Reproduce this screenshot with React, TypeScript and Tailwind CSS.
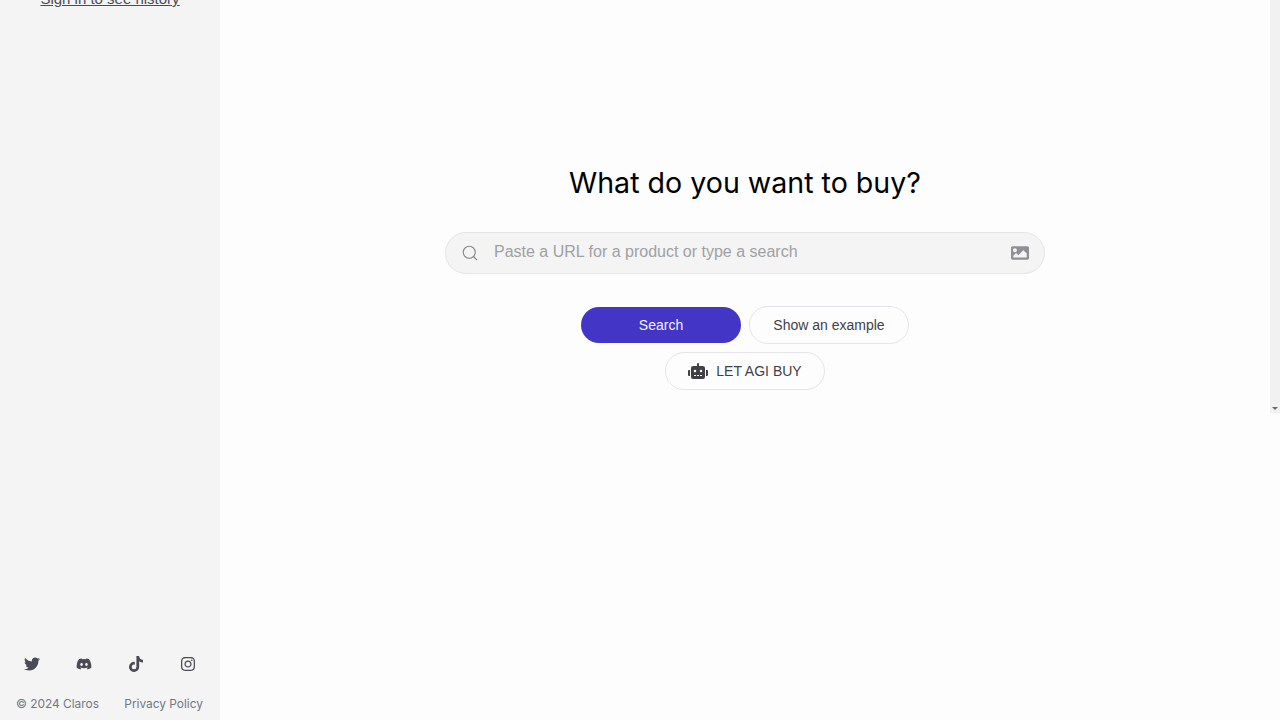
import { FaTwitter, FaDiscord, FaTiktok, FaInstagram, FaRobot, FaImage } from "react-icons/fa";
import { Search } from "lucide-react";

export default function App() {
  return (
    <div className="flex h-[720px] w-[1280px] overflow-hidden bg-[#fdfdfe] font-['Liberation_Sans',sans-serif]">
      <aside className="flex h-full w-[220px] shrink-0 flex-col justify-between bg-[#f4f4f4]">
        <a className="-mt-[10px] block text-center text-[15px] leading-[18px] text-[#4b4b55] underline">Sign in to see history</a>
        <div>
          <div className="flex items-center justify-between px-[24px] text-[#4a4a54]">
            <FaTwitter size={16} />
            <FaDiscord size={16} />
            <FaTiktok size={16} />
            <FaInstagram size={16} />
          </div>
          <div className="mt-[24px] mb-[8px] flex justify-between pr-[17px] pl-[16px] font-['Inter',sans-serif] text-[11.9px] leading-[16px] text-[#717787]">
            <span>© 2024 Claros</span>
            <span>Privacy Policy</span>
          </div>
        </div>
      </aside>
      <main className="flex flex-1 flex-col items-center pt-[163px]">
        <h1 className="font-['Inter',sans-serif] text-[28.6px] leading-[40px] font-normal text-black">What do you want to buy?</h1>
        <div className="mt-[29px] flex h-[42px] w-[600px] items-center rounded-full border border-[#e5e5e7] bg-[#f4f4f4] pr-[15px] pl-[15px]">
          <Search size={18} strokeWidth={1.5} className="text-[#8a8a8f]" />
          <input
            className="ml-[15px] flex-1 bg-transparent pb-[2px] text-[16px] text-[#333] outline-none placeholder:text-[#a0a0a4]"
            placeholder="Paste a URL for a product or type a search"
          />
          <FaImage size={18} className="text-[#8f8f94]" />
        </div>
        <div className="mt-[32px] flex items-center gap-[8px]">
          <button className="h-[36px] w-[160px] rounded-full bg-[#4335c5] text-[14px] text-[#f4f2ff]">Search</button>
          <button className="h-[38px] w-[160px] rounded-full border border-[#e5e5ea] text-[14px] text-[#3f3f46]">Show an example</button>
        </div>
        <button className="mt-[8px] flex h-[38px] w-[160px] items-center justify-center gap-[8px] rounded-full border border-[#e5e5ea] text-[14px] text-[#3f3f46]">
          <FaRobot size={20} />
          <span>LET AGI BUY</span>
        </button>
      </main>
      <div className="flex h-[413px] w-[10px] shrink-0 items-end justify-center bg-[#f1f1f1] pb-[3px]">
        <div className="h-0 w-0 border-x-[3px] border-t-[3px] border-x-transparent border-t-[#6b6b6b]" />
      </div>
    </div>
  );
}
